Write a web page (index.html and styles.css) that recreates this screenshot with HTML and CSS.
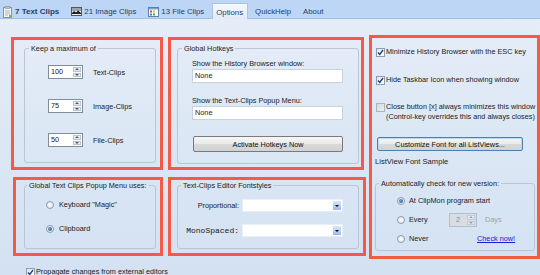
FILE: index.html
```html
<!DOCTYPE html>
<html>
<head>
<meta charset="utf-8">
<link rel="stylesheet" href="styles.css">
</head>
<body>
<div class="tabs">
  <div class="tab bold">
    <svg class="ico" width="10" height="12" viewBox="0 0 10 12"><rect x="0.5" y="1.5" width="8" height="10" fill="#f4f6f8" stroke="#8a949e"/><rect x="2" y="0.5" width="5" height="2" fill="#b8c0c8" stroke="#7a848e" stroke-width="0.5"/><path d="M2 5h5M2 7h5M2 9h3" stroke="#9aa4ae" stroke-width="0.8"/><path d="M6 8l3 2-3 2z" fill="#6cc04a"/></svg>
    <span>7 Text Clips</span>
  </div>
  <div class="tab">
    <svg class="ico" width="11" height="9" viewBox="0 0 11 9"><rect x="0.5" y="0.5" width="10" height="8" fill="#eceef1" stroke="#555"/><rect x="1" y="1" width="9" height="3" fill="#9aa3b0"/><path d="M1 6 L3 4 L5 5.5 L7 3.5 L10 6 V7 H1z" fill="#1e1e1e"/></svg>
    <span>21 Image Clips</span>
  </div>
  <div class="tab">
    <svg class="ico" width="11" height="10" viewBox="0 0 11 10"><rect x="0.5" y="0.5" width="10" height="9" fill="#fff" stroke="#5d7fa8"/><rect x="1" y="1" width="9" height="1.5" fill="#7fa3d0"/><rect x="2" y="3.5" width="2" height="2" fill="#e04040"/><rect x="5" y="3.5" width="2" height="2" fill="#e8c030"/><rect x="2" y="6.5" width="2" height="2" fill="#3a7de0"/><rect x="5" y="6.5" width="2" height="2" fill="#40b040"/></svg>
    <span>13 File Clips</span>
  </div>
  <div class="tab active"><span>Options</span></div>
  <div class="tab"><span>QuickHelp</span></div>
  <div class="tab"><span>About</span></div>
</div>

<div class="page">
  <div class="grid">
    <section class="hl hl-max">
      <fieldset class="fs">
        <legend class="lg-max">Keep a maximum of</legend>
        <div class="max-rows">
          <div class="max-row">
            <div class="spin"><span class="spin-val">100</span><span class="spin-btns"><i class="up"></i><i class="dn"></i></span></div>
            <span>Text-Clips</span>
          </div>
          <div class="max-row">
            <div class="spin"><span class="spin-val">75</span><span class="spin-btns"><i class="up"></i><i class="dn"></i></span></div>
            <span>Image-Clips</span>
          </div>
          <div class="max-row">
            <div class="spin"><span class="spin-val">50</span><span class="spin-btns"><i class="up"></i><i class="dn"></i></span></div>
            <span>File-Clips</span>
          </div>
        </div>
      </fieldset>
    </section>

    <section class="hl hl-hot">
      <fieldset class="fs">
        <legend class="lg-hot">Global Hotkeys</legend>
        <div class="hot-body">
          <div class="hot-label first">Show the History Browser window:</div>
          <div class="field">None</div>
          <div class="hot-label">Show the Text-Clips Popup Menu:</div>
          <div class="field">None</div>
          <div class="btn btn-hot">Activate Hotkeys Now</div>
        </div>
      </fieldset>
    </section>

    <section class="hl hl-right">
      <div class="chk r1"><span class="cb"><svg width="7" height="7" viewBox="0 0 7 7"><path d="M1 3.5 L2.8 5.5 L6 1" fill="none" stroke="#1f3f78" stroke-width="1.3"/></svg></span><span>Minimize History Browser with the ESC key</span></div>
      <div class="chk r2"><span class="cb"><svg width="7" height="7" viewBox="0 0 7 7"><path d="M1 3.5 L2.8 5.5 L6 1" fill="none" stroke="#1f3f78" stroke-width="1.3"/></svg></span><span>Hide Taskbar Icon when showing window</span></div>
      <div class="chk r3"><span class="cb off"></span><span>Close button [x] always minimizes this window<br>(Control-key overrides this and always closes)</span></div>
      <div class="btn btn-font">Customize Font for all ListViews...</div>
      <div class="sample">ListView Font Sample</div>
      <fieldset class="fs fs-upd">
        <legend class="lg-upd">Automatically check for new version:</legend>
        <div class="upd-rows">
          <div class="upd-row"><span class="opt"><span class="rb on"></span><span>At ClipMon program start</span></span></div>
          <div class="upd-row"><span class="opt w44"><span class="rb"></span><span>Every</span></span>
            <div class="spin dis"><span class="spin-val">2</span><span class="spin-btns"><i class="up"></i><i class="dn"></i></span></div>
            <span class="grey">Days</span></div>
          <div class="upd-row"><span class="opt w80"><span class="rb"></span><span>Never</span></span><span class="link">Check now!</span></div>
        </div>
      </fieldset>
    </section>

    <section class="hl hl-popup">
      <fieldset class="fs">
        <legend class="lg-popup">Global Text Clips Popup Menu uses:</legend>
        <div class="popup-rows">
          <div class="opt"><span class="rb"></span><span>Keyboard &quot;Magic&quot;</span></div>
          <div class="opt"><span class="rb on"></span><span>Clipboard</span></div>
        </div>
      </fieldset>
    </section>

    <section class="hl hl-font">
      <fieldset class="fs">
        <legend class="lg-font">Text-Clips Editor Fontstyles</legend>
        <div class="font-rows">
          <div class="font-row"><span class="font-lab">Proportional:</span><span class="combo"><span class="combo-btn"></span></span></div>
          <div class="font-row"><span class="font-lab mono">MonoSpaced:</span><span class="combo"><span class="combo-btn"></span></span></div>
        </div>
      </fieldset>
    </section>
  </div>

  <div class="chk propagate"><span class="cb"><svg width="7" height="7" viewBox="0 0 7 7"><path d="M1 3.5 L2.8 5.5 L6 1" fill="none" stroke="#1f3f78" stroke-width="1.3"/></svg></span><span>Propagate changes from external editors</span></div>
</div>
</body>
</html>
```

FILE: styles.css
```css
* { box-sizing: border-box; }
html, body { margin: 0; padding: 0; }
body {
  width: 540px; height: 275px; overflow: hidden;
  font-family: "Liberation Sans", Arial, sans-serif;
  font-size: 7.3px; color: #1b1b1b;
  background: #d6e3f3;
}

/* tabs */
.tabs {
  height: 19px; background: #bdd6f5; border-bottom: 1px solid #9ebfe8;
  display: flex; align-items: flex-end; gap: 3px;
  color: #1f3d6b; font-size: 7.8px;
}
.tab { height: 15px; display: flex; align-items: center; gap: 2px; padding: 2px 5px 0 4px; }
.tab:first-child { padding-left: 3px; }
.tab.bold { font-weight: bold; font-size: 8px; }
.tab .ico { flex: none; }
.tab.active {
  background: linear-gradient(#f6f9fd, #e1eaf6);
  border: 1px solid #a7c3e6; border-bottom: none;
  margin-bottom: -1px; height: 16px; padding: 1px 4px 0 3px;
}

/* page */
.page {
  height: 256px;
  background: linear-gradient(#e5edf8 0%, #dde8f5 40%, #d3e1f2 100%);
}
.grid {
  display: grid;
  grid-template-columns: 152px 196px 171px;
  grid-template-rows: 133px 79px;
  column-gap: 5px; row-gap: 7px;
  padding: 18px 0 0 11px;
}
.hl { border: 3px solid #f45a45; display: flex; }
.hl-max { padding: 4px 4px 4px 10px; }
.hl-hot { padding: 4px 2px 3px 6px; }
.hl-right { grid-column: 3; grid-row: 1 / span 2; margin: -2px 0 -3px 0; flex-direction: column; padding: 0 1px 5px 4px; }
.hl-popup { margin-left: 2px; padding: 1px 4px 4px 8px; }
.hl-font { margin-right: -2px; padding: 1px 4px 4px 6px; }

fieldset.fs {
  margin: 0; padding: 0; min-width: 0; flex: 1;
  border: 1px solid #bcc6d2; border-radius: 3px;
}
legend { padding: 0 2px; line-height: 9px; }
.lg-max, .lg-hot { margin-left: 4px; }
.lg-upd, .lg-font { margin-left: 3px; }
.lg-popup { margin-left: 2px; }

/* keep maximum */
.max-rows { display: flex; flex-direction: column; gap: 20px; padding: 12px 0 0 23px; }
.max-row { display: flex; align-items: center; gap: 10px; }
.spin { width: 35px; height: 14px; border: 1px solid #7f8c99; background: #fff; display: flex; flex: none; }
.spin-val { flex: 1; padding-left: 2px; line-height: 12px; }
.spin-btns { width: 10px; display: flex; flex-direction: column; gap: 1px; padding: 1px; }
.spin-btns i {
  flex: 1; background: linear-gradient(#f5f7fa, #dce3eb); border: 1px solid #b9c4d0;
  display: flex; align-items: center; justify-content: center;
}
.spin-btns i::after { content: ""; border-left: 2px solid transparent; border-right: 2px solid transparent; }
.spin-btns i.up::after { border-bottom: 2px solid #4d5e70; }
.spin-btns i.dn::after { border-top: 2px solid #4d5e70; }
.spin.dis { width: 28px; background: #d8dde3; border-color: #b4bfca; color: #858b93; margin: -2px 0; }
.spin.dis .spin-val { text-align: center; padding-left: 0; }
.spin.dis .spin-btns i { background: linear-gradient(#eef1f4, #dde2e8); border-color: #c3ccd6; }
.spin.dis .spin-btns i.up::after { border-bottom-color: #9aa5b1; }
.spin.dis .spin-btns i.dn::after { border-top-color: #9aa5b1; }

/* hotkeys */
.hot-body { display: flex; flex-direction: column; padding: 6px 15px 0 14px; }
.hot-label { line-height: 9px; margin-top: 13px; }
.hot-label.first { margin-top: 0; }
.field { height: 14px; margin-top: 1px; border: 1px solid #c6d2de; background: #fff; padding-left: 2px; line-height: 12px; }
.btn {
  height: 16px; display: flex; align-items: center; justify-content: center;
  border: 1px solid #7a7a7a; border-radius: 2px;
  background: linear-gradient(#f6f6f6 0%, #e9e9e9 50%, #d9d9d9 51%, #d2d2d2 100%);
  color: #111;
}
.btn-hot { margin-top: 16px; margin-left: 1px; }

/* right column */
.chk { display: flex; align-items: center; gap: 1px; line-height: 10px; }
.cb {
  width: 9px; height: 9px; flex: none; border: 1px solid #8e9db0;
  background: linear-gradient(135deg, #dce4ed, #ffffff);
  display: flex; align-items: center; justify-content: center;
}
.cb.off { background: linear-gradient(135deg, #d2d8df, #eef1f4); border-color: #a9b4c0; }
.r1 { margin-top: 9px; }
.r2 { margin-top: 18px; }
.r3 { margin-top: 17px; align-items: flex-start; }
.r3 .cb { margin-top: 1px; }
.btn-font {
  margin-top: 15px; margin-left: 1px; width: 146px; height: 14px;
  border-color: #4b80b0; box-shadow: inset 0 0 0 1px #b5dcf3;
}
.sample { margin-top: 6px; margin-left: -1px; line-height: 10px; font-size: 7.6px; }
fieldset.fs-upd { margin: 12px 1px 0 -1px; }
.upd-rows { display: flex; flex-direction: column; gap: 9px; padding: 8px 0 0 21px; }
.upd-row { display: flex; align-items: center; gap: 8px; height: 10px; line-height: 10px; }
.opt { display: flex; align-items: center; gap: 4px; line-height: 10px; }
.opt.w44 { width: 44px; }
.opt.w80 { width: 72px; }
.rb {
  width: 8px; height: 8px; border-radius: 50%; flex: none;
  border: 1px solid #8e9db0; background: radial-gradient(#ffffff, #d6dee8);
  display: flex; align-items: center; justify-content: center;
}
.rb.on::after {
  content: ""; width: 4px; height: 4px; border-radius: 50%;
  background: radial-gradient(circle at 40% 40%, #6fa0d8, #1d4a85);
}
.grey { color: #9aa3ad; }
.link { color: #1020d8; text-decoration: underline; }

/* popup */
.popup-rows { display: flex; flex-direction: column; gap: 14px; padding: 10px 0 0 21px; }
.popup-rows .opt { gap: 5px; }

/* fonts */
.font-rows { display: flex; flex-direction: column; gap: 12px; padding: 9px 0 0 0; }
.font-row { display: flex; align-items: center; gap: 3px; }
.font-lab { width: 61px; text-align: right; color: #222; }
.font-lab.mono { font-family: "Liberation Mono", "Courier New", monospace; font-size: 8px; }
.combo {
  width: 101px; height: 13px; background: #fff; border: 1px solid #e9eff7;
  display: flex; justify-content: flex-end; padding: 1px;
}
.combo-btn {
  width: 8px; background: linear-gradient(#dbe8f9, #97bbe8);
  display: flex; align-items: center; justify-content: center;
}
.combo-btn::after { content: ""; border-left: 2px solid transparent; border-right: 2px solid transparent; border-top: 2px solid #000; }

/* bottom */
.propagate { margin: 11px 0 0 26px; }
```
